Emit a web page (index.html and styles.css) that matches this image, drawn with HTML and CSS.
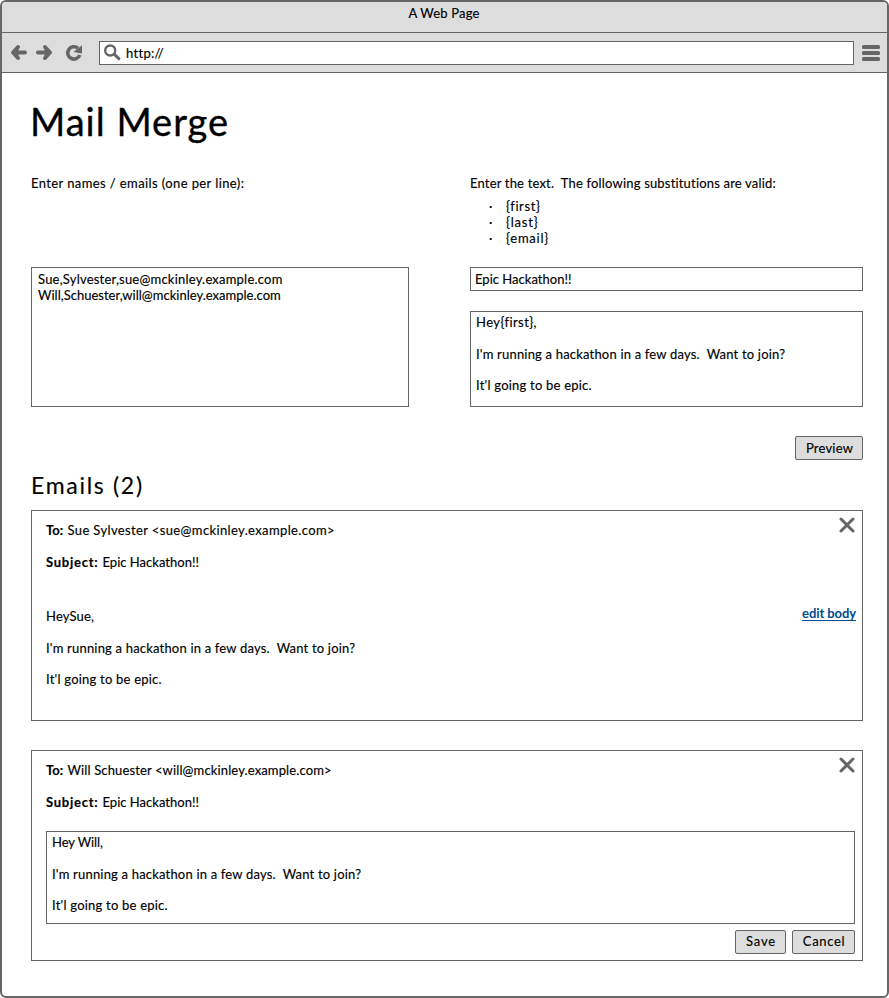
FILE: index.html
```html
<!DOCTYPE html>
<html lang="en">
<head>
<meta charset="utf-8">
<title>A Web Page</title>
<link rel="stylesheet" href="styles.css">
</head>
<body>
<div class="window">
  <header class="titlebar"><span class="t-window">A Web Page</span></header>
  <nav class="toolbar">
    <svg class="nav-icons" width="90" height="39" viewBox="0 0 90 39" fill="none" stroke="#666" stroke-width="4" stroke-linecap="round" stroke-linejoin="round">
      <path d="M23 19.500H12M16 14l-5 5.500 5 5.500"/>
      <path d="M11 19.500l4.500-4v8z" fill="#666" stroke-width="2"/>
      <path d="M36 19.500H47M43 14l5 5.500-5 5.500"/>
      <path d="M48 19.500l-4.500-4v8z" fill="#666" stroke-width="2"/>
      <path d="M76 15.200A6.200 6.200 0 1 0 77.800 22" stroke-width="3.600" stroke-linecap="butt"/>
      <path d="M80 12.200v8.300l-8.500-1.500z" fill="#666" stroke="none"/>
    </svg>
    <div class="url">
      <svg width="18" height="18" viewBox="0 0 18 18" fill="none" stroke="#666" stroke-linecap="round">
        <circle cx="6.200" cy="6.500" r="5" stroke-width="2.400"/>
        <path d="M10.600 10.600l4.300 4.100" stroke-width="3"/>
      </svg>
      <span class="t-url">http://</span>
    </div>
    <svg class="menu" width="18" height="18" viewBox="0 0 18 18" fill="#666">
      <rect y="1" width="18" height="4" rx="1.500"/>
      <rect y="7" width="18" height="4" rx="1.500"/>
      <rect y="13" width="18" height="4" rx="1.500"/>
    </svg>
  </nav>
  <main>
    <h1>Mail Merge</h1>
    <div class="columns">
      <section class="names">
        <p class="t-names">Enter names / emails (one per line):</p>
        <div class="box names-box">
          <p class="t-sue-row">Sue,Sylvester,sue@mckinley.example.com</p>
          <p class="t-will-row">Will,Schuester,will@mckinley.example.com</p>
        </div>
      </section>
      <section class="message">
        <p class="t-text">Enter the text.  The following substitutions are valid:</p>
        <ul>
          <li class="t-first">{first}</li>
          <li class="t-last">{last}</li>
          <li class="t-email">{email}</li>
        </ul>
        <div class="box subject-box"><span class="t-epic">Epic Hackathon!!</span></div>
        <div class="box body-box letter">
          <p class="t-hey-first">Hey{first},</p>
          <p class="t-run">I'm running a hackathon in a few days.  Want to join?</p>
          <p class="t-itl">It'l going to be epic.</p>
        </div>
      </section>
    </div>
    <div class="actions"><button class="preview t-preview">Preview</button></div>
    <h2>Emails (2)</h2>
    <article class="card">
      <svg class="close" width="17" height="17" viewBox="0 0 17 17" stroke="#666" stroke-width="3" stroke-linecap="round"><path d="M2 3l12 12M14 3L2 15"/></svg>
      <p><b class="t-to">To:</b><span class="t-sue-to">Sue Sylvester &lt;sue@mckinley.example.com&gt;</span></p>
      <p class="subject"><b class="t-subject">Subject:</b><span class="t-epic">Epic Hackathon!!</span></p>
      <div class="read-row">
        <div class="letter">
          <p class="t-heysue">HeySue,</p>
          <p class="t-run">I'm running a hackathon in a few days.  Want to join?</p>
          <p class="t-itl">It'l going to be epic.</p>
        </div>
        <a class="edit">edit body</a>
      </div>
    </article>
    <article class="card">
      <svg class="close" width="17" height="17" viewBox="0 0 17 17" stroke="#666" stroke-width="3" stroke-linecap="round"><path d="M2 3l12 12M14 3L2 15"/></svg>
      <p><b class="t-to">To:</b><span class="t-will-to">Will Schuester &lt;will@mckinley.example.com&gt;</span></p>
      <p class="subject"><b class="t-subject">Subject:</b><span class="t-epic">Epic Hackathon!!</span></p>
      <div class="box edit-box letter">
        <p class="t-heywill">Hey Will,</p>
        <p class="t-run">I'm running a hackathon in a few days.  Want to join?</p>
        <p class="t-itl">It'l going to be epic.</p>
      </div>
      <div class="card-actions">
        <button class="save t-save">Save</button>
        <button class="cancel t-cancel">Cancel</button>
      </div>
    </article>
  </main>
</div>
</body>
</html>
```
FILE: styles.css
```css
* { box-sizing: border-box; }
body {
  margin: 0;
  background: #fff;
  color: #000;
  font: 13px/16px Lato, "Liberation Sans", sans-serif;
  font-variant-ligatures: none;
  -webkit-text-stroke: .15px currentColor;
}
p, ul, h1, h2 { margin: 0; padding: 0; font-weight: 400; }
p, span, b, li { white-space: pre; }

.window {
  height: 998px;
  border: 2px solid #666;
  border-radius: 6px;
  overflow: hidden;
  background: #fff;
}
.titlebar {
  height: 31px;
  border-bottom: 1px solid #666;
  background: #ddd;
  text-align: center;
  padding: 3px 1px 0 0;
}
.toolbar {
  display: flex;
  align-items: center;
  height: 40px;
  border-bottom: 1px solid #666;
  background: #ddd;
  padding-right: 7px;
}
.nav-icons { margin-right: 7px; margin-left: 0; }
.url {
  display: flex;
  align-items: center;
  flex: 1;
  height: 24px;
  padding-left: 4px;
  gap: 4px;
  border: 1px solid #666;
  background: #fff;
}
.menu { margin-left: 8px; }

main { padding: 26px 24px 0 29px; }
h1 {
  margin-left: -1px;
  font-size: 38px;
  line-height: 44px;
  letter-spacing: 1px;
  -webkit-text-stroke: .35px currentColor;
}
.columns { display: flex; justify-content: space-between; margin-top: 32px; }
.names { width: 378px; }
.message { width: 393px; }
.box { border: 1px solid #666; background: #fff; }
.names-box { height: 140px; margin-top: 76px; padding: 3px 6px; }
ul { list-style: none; margin-top: 7px; padding-left: 19px; }
li::before { content: "·"; display: inline-block; width: 17px; letter-spacing: 0; }
.subject-box { height: 24px; margin-top: 21px; padding: 3px 4px; }
.body-box { height: 96px; margin-top: 20px; padding: 2px 5px; }
.letter p + p { margin-top: 16px; }
.letter p:last-child { margin-top: 15px; }
.actions { display: flex; justify-content: flex-end; margin-top: 29px; }
button {
  height: 24px;
  border: 1px solid #666;
  border-radius: 2px;
  padding: 0 0 1px 1px;
  background: #ddd;
  color: #000;
  font: inherit;
}
.preview { width: 68px; }
.save { width: 51px; }
.cancel { width: 63px; }
.save, .cancel { padding-bottom: 2px; }
h2 { margin-top: 11px; font-size: 23px; line-height: 28px; letter-spacing: 1.7px; }

.card {
  position: relative;
  height: 211px;
  margin-top: 11px;
  border: 1px solid #666;
  padding: 11px 7px 0 14px;
}
.card + .card { margin-top: 29px; }
.close { position: absolute; top: 5px; right: 6px; }
.subject { margin-top: 16px; }
.t-to, .t-subject { display: inline-block; }
.t-to { width: 21.5px; }
.t-subject { width: 56.5px; letter-spacing: .75px; }
.read-row { display: flex; justify-content: space-between; align-items: flex-start; margin-top: 38px; }
.edit {
  margin: -3px -1px 0 0;
  height: 16px;
  border-bottom: 1px solid #004b8d;
  color: #004b8d;
  font-weight: 700;
  letter-spacing: -.08px;
  -webkit-text-stroke: 0;
}
.edit-box { height: 93px; margin-top: 21px; padding: 2px 5px; }
.card-actions { display: flex; justify-content: flex-end; gap: 6px; margin-top: 6px; }

/* Tracking per string */
.t-window { letter-spacing: .19px; }
.t-url { letter-spacing: .3px; }
.t-names { letter-spacing: .4px; }
.t-text { letter-spacing: .18px; }
.t-first { letter-spacing: .6px; }
.t-last { letter-spacing: .8px; }
.t-email { letter-spacing: .75px; }
.t-sue-row { letter-spacing: .21px; }
.t-will-row { letter-spacing: .01px; }
.t-epic { letter-spacing: .02px; }
.t-hey-first { letter-spacing: .42px; }
.t-run { letter-spacing: .19px; }
.t-itl { letter-spacing: .22px; }
.t-preview { letter-spacing: .21px; }
.t-sue-to { letter-spacing: .37px; }
.t-will-to { letter-spacing: .13px; }
.t-heysue { letter-spacing: .16px; }
.t-heywill { letter-spacing: -.07px; }
.t-save { letter-spacing: .8px; }
.t-cancel { letter-spacing: .65px; }
```
